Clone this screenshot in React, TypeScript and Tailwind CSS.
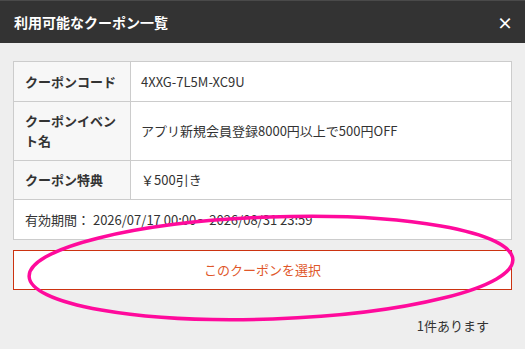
import React from 'react';

const rows = [
  { label: 'クーポンコード', value: '4XXG-7L5M-XC9U', h: 'h-[40px]' },
  { label: 'クーポンイベント名', value: 'アプリ新規会員登録8000円以上で500円OFF', h: 'h-[59px]' },
  { label: 'クーポン特典', value: '￥500引き', h: 'h-[39px]' },
];

export default function App() {
  return (
    <div
      className="relative w-[525px] h-[349px] overflow-hidden bg-[#eeeeee] text-[13px] text-[#333333]"
      style={{ fontFamily: '"Noto Sans CJK JP", "Noto Sans", sans-serif' }}
    >
      {/* Header */}
      <div className="flex h-[43px] items-center justify-between border-t border-[#4a4a4a] bg-[#333333] pl-[14px] pr-[12px]">
        <h2 className="text-[14px] font-bold text-white">利用可能なクーポン一覧</h2>
        <button className="text-[16px] font-bold leading-none text-white">×</button>
      </div>

      <div className="px-[13px] pt-[18px]">
        {/* Coupon table */}
        <table className="w-full border-collapse bg-white">
          <tbody>
            {rows.map((r) => (
              <tr key={r.label} className={r.h}>
                <th className="w-[117px] border border-[#cccccc] bg-[#f7f7f7] px-[11px] py-0 text-left align-middle font-bold leading-[20px]">
                  {r.label}
                </th>
                <td className="border border-[#cccccc] px-[10px] py-0 align-middle leading-[20px]">{r.value}</td>
              </tr>
            ))}
            <tr className="h-[40px]">
              <td colSpan={2} className="border border-[#cccccc] px-[11px] py-0 leading-[20px]">
                有効期間： 2026/07/17 00:00～2026/08/31 23:59
              </td>
            </tr>
          </tbody>
        </table>

        {/* Select button */}
        <button className="mt-[10px] flex h-[40px] w-full items-center justify-center border border-[#cc3311] bg-white text-[#e0572a]">
          このクーポンを選択
        </button>

        <div className="flex justify-end pr-[23px] pt-[26px]">
          <span>1件あります</span>
        </div>
      </div>

      {/* Annotation overlay */}
      <svg className="pointer-events-none absolute left-0 top-0" width="525" height="349">
        <ellipse
          cx="271"
          cy="268"
          rx="242"
          ry="51"
          fill="none"
          stroke="#ff0a9c"
          strokeWidth="3.5"
          transform="rotate(-2 271 268)"
        />
      </svg>
    </div>
  );
}
